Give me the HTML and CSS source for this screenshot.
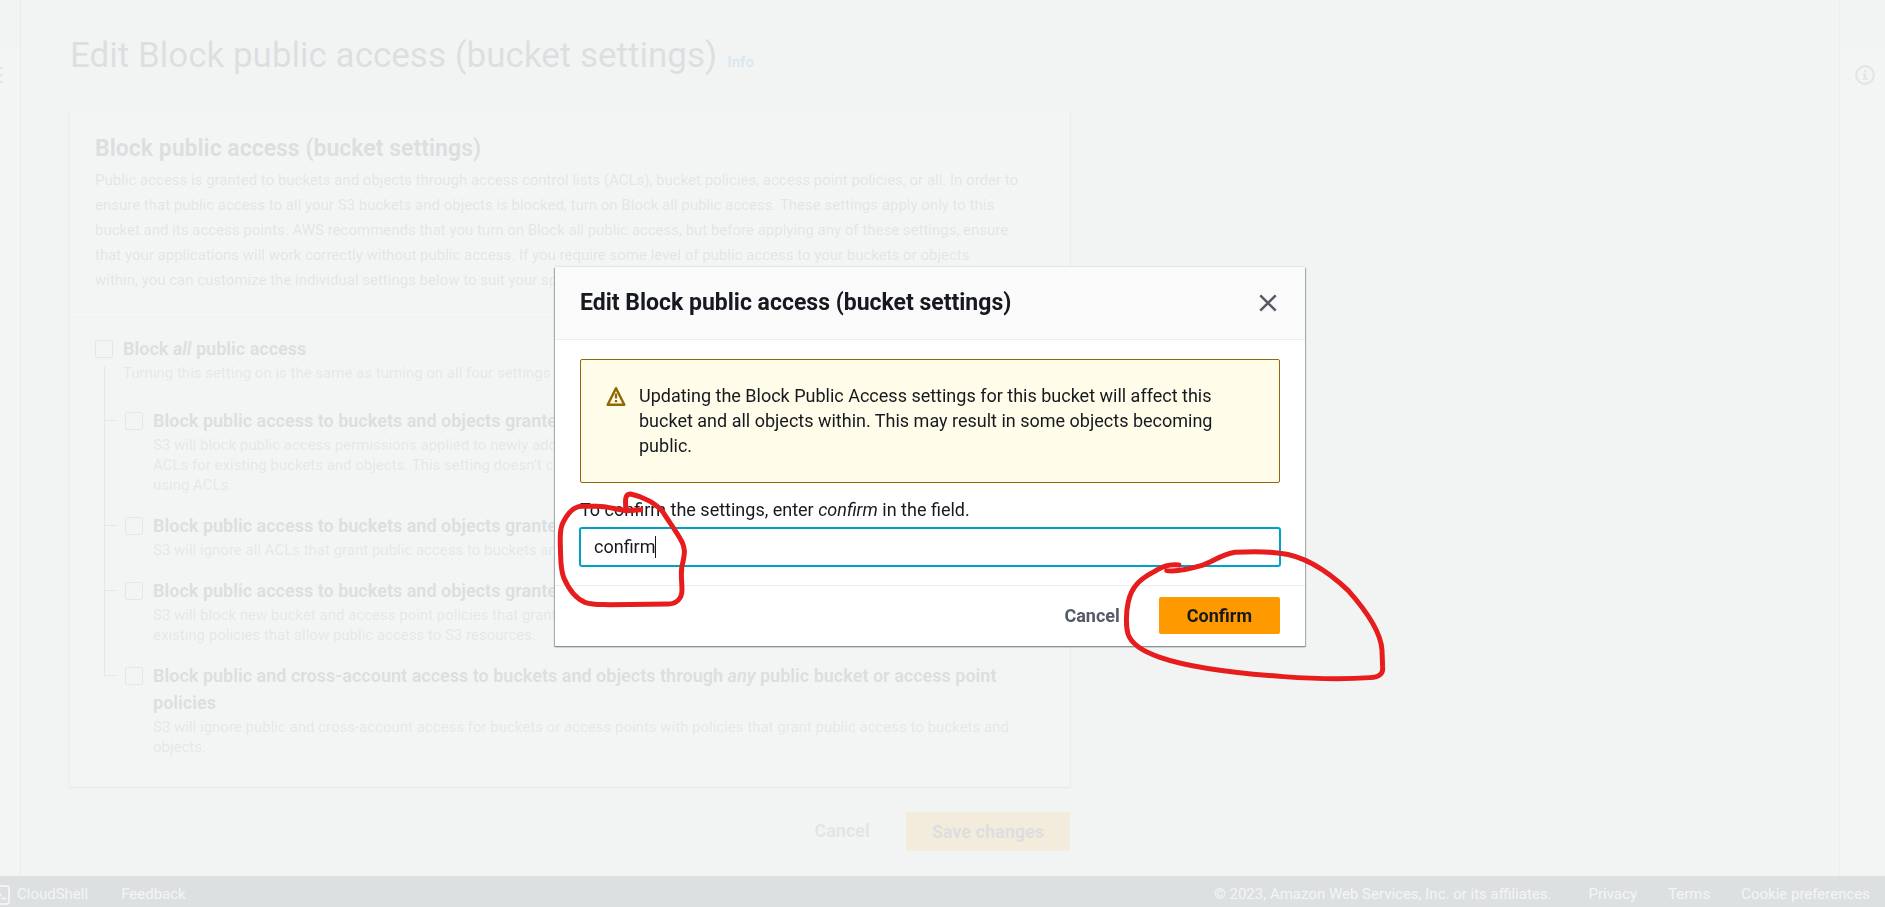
FILE: index.html
```html
<!DOCTYPE html>
<html lang="en">
<head>
<meta charset="utf-8">
<title>Edit Block public access (bucket settings)</title>
<link rel="stylesheet" href="styles.css">
</head>
<body>
<div class="app">
  <div class="shell">
    <nav class="rail rail-left" aria-label="Navigation">
      <button class="rail-button" type="button" aria-label="Open navigation">
        <svg class="menu-icon" viewBox="0 0 16 16" width="20" height="20"><path d="M1 2.500h14M1 8h14M1 13.500h14" fill="none" stroke="currentColor" stroke-width="2"/></svg>
      </button>
    </nav>
    <main class="main">
      <div class="content">
        <header class="page-header">
          <h1 class="page-title">Edit Block public access (bucket settings)</h1>
          <a class="info-link" href="#">Info</a>
        </header>
        <section class="card">
          <div class="card-header">
            <h2 class="card-title">Block public access (bucket settings)</h2>
            <p class="card-text">Public access is granted to buckets and objects through access control lists (ACLs), bucket policies, access point policies, or all. In order to<br>ensure that public access to all your S3 buckets and objects is blocked, turn on Block all public access. These settings apply only to this<br>bucket and its access points. AWS recommends that you turn on Block all public access, but before applying any of these settings, ensure<br>that your applications will work correctly without public access. If you require some level of public access to your buckets or objects<br>within, you can customize the individual settings below to suit your specific storage use cases.</p>
          </div>
          <div class="card-body">
            <div class="option">
              <input class="checkbox" type="checkbox" id="all">
              <div>
                <label class="option-label" for="all">Block <em>all</em> public access</label>
                <p class="option-text">Turning this setting on is the same as turning on all four settings below.</p>
              </div>
            </div>
            <ul class="tree">
              <li class="option branch">
                <input class="checkbox" type="checkbox" id="new-acl">
                <div>
                  <label class="option-label" for="new-acl">Block public access to buckets and objects granted through <em>new</em> access control lists (ACLs)</label>
                  <p class="option-text">S3 will block public access permissions applied to newly added buckets or objects, and prevent the creation of new<br>ACLs for existing buckets and objects. This setting doesn’t change any existing permissions that allow public access<br>using ACLs.</p>
                </div>
              </li>
              <li class="option branch">
                <input class="checkbox" type="checkbox" id="any-acl">
                <div>
                  <label class="option-label" for="any-acl">Block public access to buckets and objects granted through <em>any</em> access control lists (ACLs)</label>
                  <p class="option-text">S3 will ignore all ACLs that grant public access to buckets and objects.</p>
                </div>
              </li>
              <li class="option branch">
                <input class="checkbox" type="checkbox" id="new-policy">
                <div>
                  <label class="option-label" for="new-policy">Block public access to buckets and objects granted through <em>new</em> public bucket policies</label>
                  <p class="option-text">S3 will block new bucket and access point policies that grant public access to buckets and objects. This doesn’t affect<br>existing policies that allow public access to S3 resources.</p>
                </div>
              </li>
              <li class="option branch">
                <input class="checkbox" type="checkbox" id="any-policy">
                <div>
                  <label class="option-label" for="any-policy">Block public and cross-account access to buckets and objects through <em>any</em> public bucket or access point<br>policies</label>
                  <p class="option-text">S3 will ignore public and cross-account access for buckets or access points with policies that grant public access to buckets and<br>objects.</p>
                </div>
              </li>
            </ul>
          </div>
        </section>
        <div class="actions">
          <button class="button button-link" type="button">Cancel</button>
          <button class="button button-primary button-save" type="button">Save changes</button>
        </div>
      </div>
    </main>
    <aside class="rail rail-right" aria-label="Help">
      <button class="rail-button" type="button" aria-label="Open help">
        <svg viewBox="0 0 20 20" width="20" height="20"><circle cx="10" cy="10" r="8.800" fill="none" stroke="currentColor" stroke-width="2.200"/><path d="M9 5.200h2.400v2H9zM7.800 8.800h3.600v4h1.200v1.900H7.600v-1.900H9v-2.100H7.800z" fill="currentColor"/></svg>
      </button>
    </aside>
  </div>
  <footer class="footer">
    <div class="footer-group footer-tools">
      <a class="footer-link shell-link" href="#">
        <svg class="shell-icon" viewBox="0 0 20 20" width="20" height="20"><rect x="1" y="1" width="18" height="18" rx="3" fill="none" stroke="currentColor" stroke-width="2"/><path d="M6 5.500l4.500 4.500L6 14.500M11.500 13.500h5" fill="none" stroke="currentColor" stroke-width="2"/></svg>
        CloudShell</a>
      <a class="footer-link" href="#">Feedback</a>
    </div>
    <div class="footer-group footer-legal">
      <span class="copyright">© 2023, Amazon Web Services, Inc. or its affiliates.</span>
      <a class="footer-link" href="#">Privacy</a>
      <a class="footer-link" href="#">Terms</a>
      <a class="footer-link" href="#">Cookie preferences</a>
    </div>
  </footer>
</div>

<div class="overlay">
  <section class="modal" role="dialog" aria-modal="true" aria-labelledby="modal-title">
    <header class="modal-header">
      <h2 class="modal-title" id="modal-title">Edit Block public access (bucket settings)</h2>
      <button class="close" type="button" aria-label="Close">
        <svg viewBox="0 0 20 20" width="20" height="20"><path d="M2.300 2.300l15.400 15.400M17.700 2.300L2.300 17.700" fill="none" stroke="currentColor" stroke-width="2.500"/></svg>
      </button>
    </header>
    <div class="modal-body">
      <div class="alert" role="alert">
        <svg class="alert-icon" viewBox="0 0 20 20" width="20" height="20"><path d="M10 2.200L18.300 18.700H1.700z" fill="none" stroke="currentColor" stroke-width="2.500" stroke-linejoin="round"/><path d="M10 7.500v5M10 14v2.200" fill="none" stroke="currentColor" stroke-width="2.300"/></svg>
        <p class="alert-text">Updating the Block Public Access settings for this bucket will affect this bucket and all objects within. This may result in some objects becoming public.</p>
      </div>
      <label class="field-label" for="confirm">To confirm the settings, enter <em>confirm</em> in the field.</label>
      <div class="field">
        <input class="field-input" type="text" id="confirm" value="confirm">
        <span class="caret"></span>
      </div>
    </div>
    <footer class="modal-footer">
      <button class="button button-link" type="button">Cancel</button>
      <button class="button button-primary" type="button">Confirm</button>
    </footer>
  </section>
</div>

<svg class="markup" viewBox="0 0 1885 907" aria-hidden="true">
  <g fill="none" stroke="#e71d1d" stroke-width="15" stroke-linecap="round" stroke-linejoin="round">
    <path transform="translate(540 480) scale(.3333)" d="M302 89L262 92C230 88 190 77 165 79L125 79C100 80 80 105 68 130C58 150 61 170 61 200C63 240 60 265 72 295C85 325 105 355 135 367C160 376 180 373 210 374L385 372C410 372 426 355 426 330C426 300 420 275 428 250C436 215 434 205 427 188C415 162 390 130 370 98C350 70 310 50 272 42C255 41 255 60 258 88"/>
    <path transform="translate(1000 250) scale(.3333)" d="M537 945C500 940 480 955 450 972C420 990 395 1010 385 1055C377 1090 378 1130 384 1152C395 1185 430 1205 480 1222C560 1250 700 1269 850 1280C950 1287 1050 1287 1110 1283C1140 1282 1150 1270 1148 1250L1146 1200C1143 1150 1110 1095 1045 1022C990 970 920 918 840 910C800 904 740 905 705 907C660 915 640 935 600 948C560 960 530 965 500 962"/>
  </g>
</svg>
</body>
</html>
```
FILE: styles.css
```css
* {
  box-sizing: border-box;
}

body {
  margin: 0;
  overflow: hidden;
  font-family: Roboto, "Noto Sans", sans-serif;
  font-size: 18px;
  line-height: 25px;
  color: #16191f;
  background: #f0f2f2;
}

h1, h2, p, ul {
  margin: 0;
  padding: 0;
}

a {
  color: inherit;
  text-decoration: none;
}

button {
  font: inherit;
  color: inherit;
  background: none;
  border: 0;
  padding: 0;
}

svg {
  display: block;
  flex: none;
}

.app {
  display: flex;
  flex-direction: column;
  height: 100vh;
}

.shell {
  display: flex;
  flex: 1;
}

.rail {
  flex: none;
  padding-top: 65px;
  color: #545b64;
  background: linear-gradient(#f0f2f2 50px, #fff 50px);
}

.rail-left {
  display: flex;
  justify-content: flex-end;
  width: 21px;
  padding-right: 16px;
  border-right: 1px solid #a4acac;
}

.rail-right {
  width: 46px;
  padding-left: 15px;
  border-left: 1px solid #b8c0c0;
}

.rail-button {
  display: block;
  height: 20px;
}

.main {
  flex: 1;
  padding: 34px 48px 25px;
}

.content {
  max-width: 1001px;
}

.page-header {
  display: flex;
  align-items: baseline;
  gap: 10px;
  padding-left: 1px;
  margin-bottom: 33px;
}

.page-title {
  font-size: 35px;
  line-height: 44px;
  font-weight: 400;
}

.info-link {
  font-size: 15px;
  line-height: 20px;
  font-weight: 700;
  color: #0073bb;
}

.card {
  background: #fff;
  border: 1px solid #d5dbdb;
  box-shadow: 0 1px 1px #879596, 1px 1px 1px #c0c8c8, -1px 1px 1px #c0c8c8;
}

.card-header {
  padding: 23px 25px 24px;
  border-bottom: 1px solid #d5dbdb;
}

.card-title {
  margin-bottom: 5px;
  font-size: 23px;
  line-height: 28px;
}

.card-text {
  font-size: 15px;
  color: #545b64;
}

.card-body {
  padding: 17px 25px 29px;
}

.option {
  display: flex;
  align-items: flex-start;
  gap: 10px;
}

.checkbox {
  appearance: none;
  flex: none;
  width: 18px;
  height: 18px;
  margin: 5px 0 0;
  background: #fff;
  border: 1px solid #687078;
  border-radius: 2px;
}

.option-label {
  display: block;
  margin-bottom: 1px;
  line-height: 27px;
  font-weight: 700;
}

.option-text {
  font-size: 15px;
  line-height: 20px;
  color: #687078;
}

.tree {
  display: grid;
  gap: 17px;
  margin: 24px 0 0 9px;
  list-style: none;
}

.branch {
  position: relative;
  padding-left: 21px;
}

.branch::before {
  content: "";
  position: absolute;
  left: 0;
  top: -17px;
  width: 12px;
  height: 30px;
  border: solid #687078;
  border-width: 0 0 1px 1px;
}

.branch:first-child::before {
  top: -41px;
  height: 54px;
}

.branch:not(:last-child)::after {
  content: "";
  position: absolute;
  left: 0;
  top: 13px;
  bottom: 0;
  border-left: 1px solid #687078;
}

.actions {
  display: flex;
  justify-content: flex-end;
  gap: 36px;
  margin-top: 25px;
}

.button {
  height: 37px;
  font-weight: 700;
  border-radius: 2px;
}

.button-link {
  color: #545b64;
}

.button-primary {
  padding: 0 28px;
  background: #f90;
}

.button-save {
  height: 39px;
  padding: 0 26px;
}

.footer {
  display: flex;
  justify-content: space-between;
  height: 31px;
  padding: 6px 15px 0 0;
  overflow: hidden;
  font-size: 15px;
  color: #fff;
  background: #16292f;
}

.footer-group {
  display: flex;
  gap: 31px;
}

.footer-tools {
  gap: 33px;
  margin-left: -10px;
}

.copyright {
  margin-right: 6px;
}

.shell-link {
  display: flex;
  align-items: center;
  gap: 7px;
}

.overlay {
  position: fixed;
  inset: 0;
  display: flex;
  align-items: center;
  justify-content: center;
  padding: 6px 25px 0 0;
  background: rgba(242, 244, 244, 0.9);
}

.modal {
  width: 750px;
  background: #fff;
  box-shadow: 0 1px 1px #879596, 1px 1px 1px #a9b3b5, -1px 1px 1px #a9b3b5, 0 -1px 1px #e3e7e7;
}

.modal-header {
  display: flex;
  align-items: center;
  justify-content: space-between;
  padding: 22px 25px;
  background: #fafafa;
  border-bottom: 1px solid #eaeded;
}

.modal-title {
  font-size: 23px;
  line-height: 28px;
}

.close {
  padding-right: 2px;
  color: #545b64;
}

.modal-body {
  padding: 19px 25px;
}

.alert {
  display: flex;
  gap: 13px;
  padding: 23px 60px 24px 25px;
  background: #fffce9;
  border: 1px solid #906806;
  border-radius: 2px;
}

.alert-icon {
  margin-top: 3px;
  color: #906806;
}

.field-label {
  display: block;
  margin: 14px 0 6px;
}

.field {
  position: relative;
}

.field-input {
  display: block;
  width: 100%;
  height: 38px;
  padding: 0 13px 2px;
  font: inherit;
  color: inherit;
  background: #fff;
  border: 1px solid #00a1c9;
  border-radius: 2px;
  box-shadow: 0 0 0 1px #00a1c9;
  outline: 0;
}

.caret {
  position: absolute;
  left: 75px;
  top: 8px;
  height: 22px;
  border-left: 1px solid #16191f;
}

.modal-footer {
  display: flex;
  justify-content: flex-end;
  gap: 39px;
  padding: 11px 25px 12px;
  border-top: 1px solid #eaeded;
}

.markup {
  position: fixed;
  inset: 0;
  width: 1885px;
  height: 907px;
  pointer-events: none;
}
```
